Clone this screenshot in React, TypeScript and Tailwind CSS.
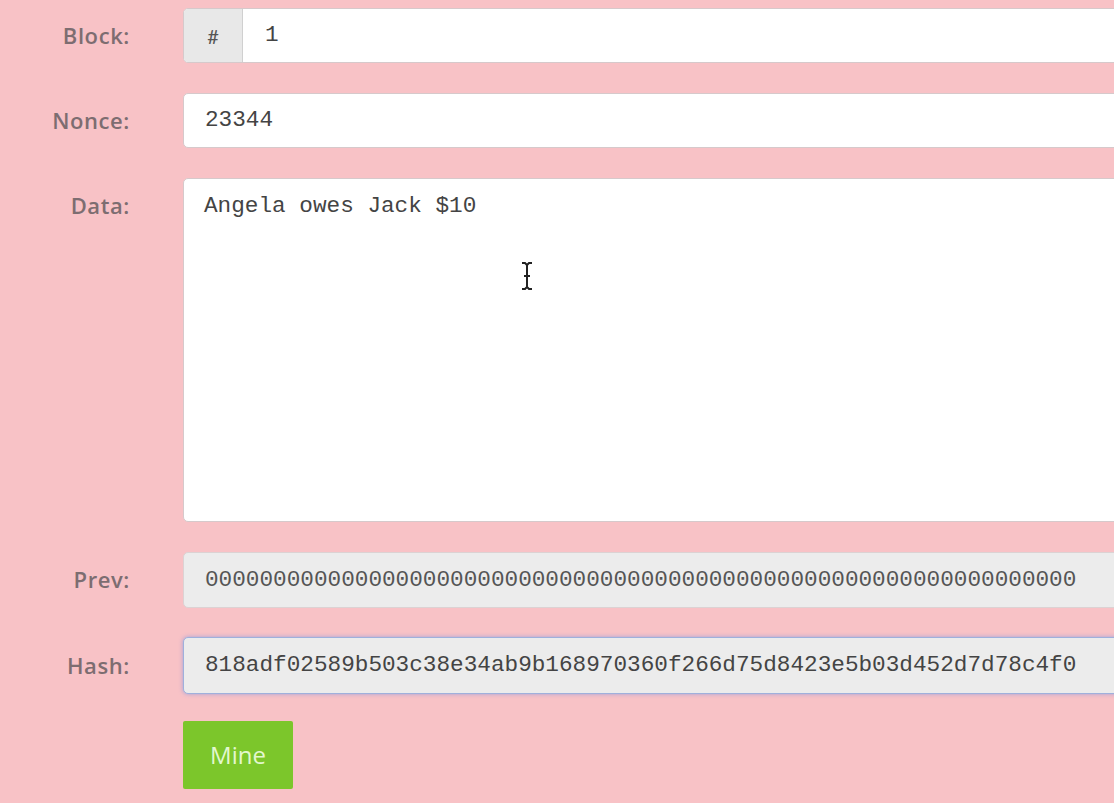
import React from "react";

const mono = { fontFamily: '"Liberation Mono", "Courier New", monospace' };

function Label({ children, top }: { children: React.ReactNode; top?: boolean }) {
  return (
    <div
      className={`w-[130px] shrink-0 text-right text-[22px] font-semibold tracking-[0.6px] text-[#7d6d71] font-['Open_Sans',sans-serif] ${
        top ? "pt-[11px]" : "self-center -mt-[1px]"
      }`}
    >
      {children}
    </div>
  );
}

export default function App() {
  const prev = "0".repeat(64);
  const hash = "818adf02589b503c38e34ab9b168970360f266d75d8423e5b03d452d7d78c4f0";

  return (
    <div className="w-[1114px] h-[803px] overflow-hidden bg-[#f8c2c6]">
      <div className="flex flex-col gap-[30px] pt-[8px] mr-[-12px]">
        {/* Block */}
        <div className="flex gap-[53px]">
          <Label>Block:</Label>
          <div className="flex flex-1 h-[55px] rounded-[5px] border border-[#d6c9cb] overflow-hidden bg-white">
            <div className="w-[59px] flex items-center justify-center bg-[#e8e8e8] border-r border-[#d0d0d0] text-[#555] text-[20px] font-['Lato',sans-serif]">
              #
            </div>
            <div className="flex items-center pl-[22px] text-[22.7px] text-[#444]" style={mono}>
              1
            </div>
          </div>
        </div>

        {/* Nonce */}
        <div className="flex gap-[53px]">
          <Label>Nonce:</Label>
          <div
            className="flex flex-1 items-center h-[55px] rounded-[5px] border border-[#d6c9cb] bg-white pl-[21px] text-[22.7px] text-[#444]"
            style={mono}
          >
            23344
          </div>
        </div>

        {/* Data */}
        <div className="flex gap-[53px]">
          <Label top>Data:</Label>
          <div
            className="relative flex-1 h-[344px] rounded-[5px] border border-[#d6c9cb] bg-white pl-[20px] pt-[10px] text-[22.7px] text-[#444]"
            style={mono}
          >
            Angela owes Jack $10
            {/* mouse cursor */}
            <svg
              className="absolute left-[336px] top-[82px]"
              width="14"
              height="30"
              viewBox="0 0 14 30"
              fill="none"
              stroke="#222"
              strokeWidth="2"
            >
              <path d="M2 2h3l2 2 2-2h3M7 4v22M2 28h3l2-2 2 2h3M4 15h6" />
            </svg>
          </div>
        </div>

        {/* Prev */}
        <div className="flex gap-[53px]">
          <Label>Prev:</Label>
          <div
            className="flex flex-1 items-center h-[56px] rounded-[5px] border border-[#dcd2d3] bg-[#ececec] pl-[21px] text-[22.7px] text-[#555]"
            style={mono}
          >
            {prev}
          </div>
        </div>

        {/* Hash */}
        <div className="flex gap-[53px] -mt-[1px]">
          <Label>Hash:</Label>
          <div
            className="flex flex-1 items-center h-[57px] rounded-[5px] border border-[#9fb0dc] bg-[#ececec] pl-[21px] text-[22.7px] text-[#444] shadow-[0_0_4px_rgba(102,140,230,0.6)]"
            style={mono}
          >
            {hash}
          </div>
        </div>

        {/* Mine */}
        <div className="flex gap-[53px] -mt-[3px]">
          <div className="w-[130px] shrink-0" />
          <button className="w-[110px] h-[68px] bg-[#7cc62b] text-[#e3f7cf] text-[24px] font-['Open_Sans',sans-serif] rounded-[2px]">
            Mine
          </button>
        </div>
      </div>
    </div>
  );
}
